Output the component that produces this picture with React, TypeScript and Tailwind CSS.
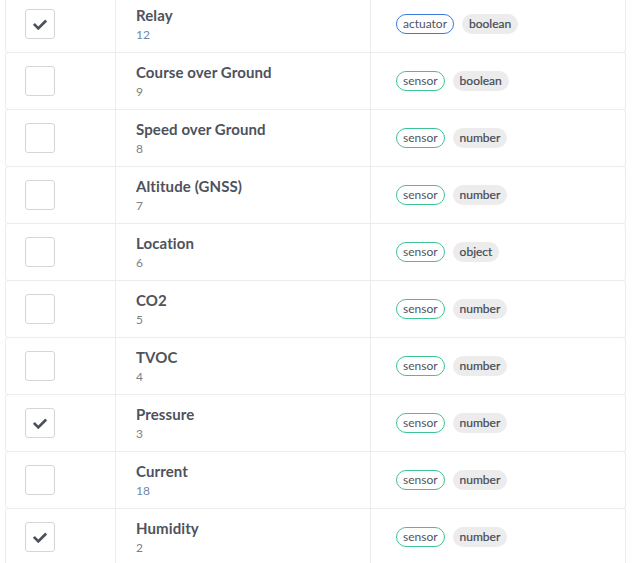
type Row = { name: string; id: number; kind: 'sensor' | 'actuator'; type: string; checked: boolean }

const rows: Row[] = [
  { name: 'Relay', id: 12, kind: 'actuator', type: 'boolean', checked: true },
  { name: 'Course over Ground', id: 9, kind: 'sensor', type: 'boolean', checked: false },
  { name: 'Speed over Ground', id: 8, kind: 'sensor', type: 'number', checked: false },
  { name: 'Altitude (GNSS)', id: 7, kind: 'sensor', type: 'number', checked: false },
  { name: 'Location', id: 6, kind: 'sensor', type: 'object', checked: false },
  { name: 'CO2', id: 5, kind: 'sensor', type: 'number', checked: false },
  { name: 'TVOC', id: 4, kind: 'sensor', type: 'number', checked: false },
  { name: 'Pressure', id: 3, kind: 'sensor', type: 'number', checked: true },
  { name: 'Current', id: 18, kind: 'sensor', type: 'number', checked: false },
  { name: 'Humidity', id: 2, kind: 'sensor', type: 'number', checked: true },
]

// heavy check mark, font-awesome style
function CheckMark() {
  return (
    <svg width="14" height="11" viewBox="0 0 512 410" className="fill-[#4b505b]">
      <path d="M173.9 401.9 7.5 235.5c-10-10-10-26.2 0-36.2l36.2-36.2c10-10 26.2-10 36.2 0L192 275.2 432.1 35.1c10-10 26.2-10 36.2 0l36.2 36.2c10 10 10 26.2 0 36.2L210.1 401.9c-10 10-26.2 10-36.2 0z" />
    </svg>
  )
}

export default function App() {
  return (
    <div className="h-[563px] overflow-hidden bg-white font-['Lato',sans-serif]">
      <div className="ml-[5px] w-[621px] -mt-[5px]">
        {rows.map(r => (
          <div key={r.name} className="-mt-px first:mt-0 flex h-[58px] rounded-[3px] border border-[#ececec]">
            <div className="w-[110px] flex items-center pl-[19px] border-r border-[#ececec]">
              <div className="w-[30px] h-[30px] rounded-[3px] border border-[#d6d6d6] bg-white flex items-center justify-center">
                {r.checked && <CheckMark />}
              </div>
            </div>
            <div className="w-[255px] flex flex-col justify-center pl-[20px] border-r border-[#ececec]">
              <span className="text-[15px] font-bold tracking-[0.1px] leading-[19px] text-[#4d525c]">{r.name}</span>
              <span className={`text-[12px] leading-[16px] mt-[2px] ${r.id >= 10 ? 'text-[#6f87a6]' : 'text-[#808080]'}`}>{r.id}</span>
            </div>
            <div className="flex-1 flex items-center gap-[8px] pl-[25px]">
              <span className={`h-[20px] px-[6px] rounded-full border text-[12px] leading-[18px] text-[#4f545d] ${r.kind === 'actuator' ? 'border-[#3b7be0]' : 'border-[#3fc397]'}`}>{r.kind}</span>
              <span className="h-[20px] px-[7px] rounded-full bg-[#ececec] text-[12px] leading-[20px] text-[#454a53] [-webkit-text-stroke:0.2px_#454a53]">{r.type}</span>
            </div>
          </div>
        ))}
      </div>
    </div>
  )
}
